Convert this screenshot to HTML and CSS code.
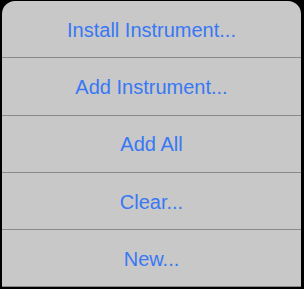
FILE: index.html
```
<!DOCTYPE html>
<html lang="en">
<head>
    <meta charset="UTF-8">
    <meta name="viewport" content="width=device-width, initial-scale=1.0">
    <title>Instrument Menu</title>
    <link rel="stylesheet" href="styles.css">
</head>
<body>
    <div class="sheet">
        <button class="sheet-btn">Install Instrument...</button>
        <button class="sheet-btn">Add Instrument...</button>
        <button class="sheet-btn">Add All</button>
        <button class="sheet-btn">Clear...</button>
        <button class="sheet-btn">New...</button>
    </div>
</body>
</html>
```

FILE: styles.css
```
html, body { margin: 0; padding: 0; background: #000; }
body { width: 304px; height: 289px; overflow: hidden; }
.sheet { margin: 1px 3px 0 2px; background: #c8c8c8; border-radius: 13px 13px 0 0; overflow: hidden; display: flex; flex-direction: column; }
.sheet-btn { box-sizing: border-box; height: 57.3px; border: none; border-bottom: 1px solid #8a8a8a; background: none; padding: 2px 0 0; font-family: "Liberation Sans", Arial, sans-serif; font-size: 20px; color: #3878f4; cursor: pointer; }
```
